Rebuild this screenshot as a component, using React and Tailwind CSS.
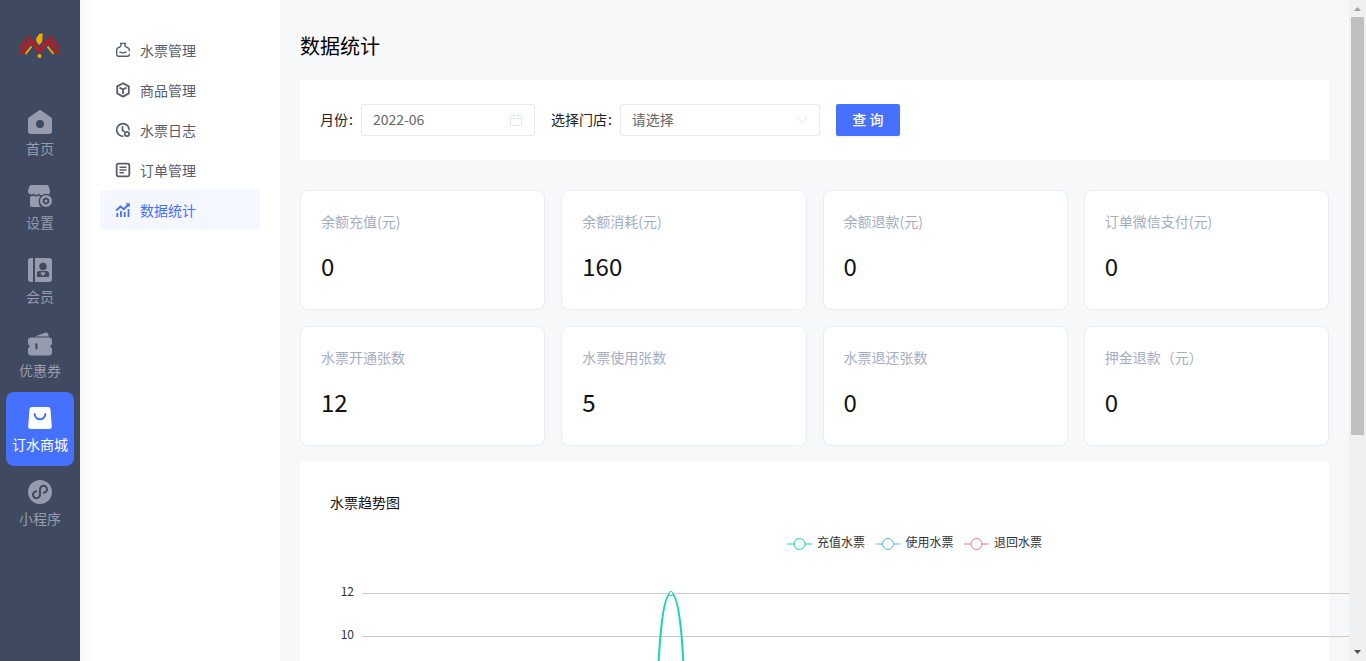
import React, { useState } from 'react';

/* ---------- Sidebar icons (24 x 24) ---------- */

const HomeIcon = () => (
  <svg width="24" height="24" viewBox="0 0 24 24" fill="currentColor" aria-hidden="true">
    <path
      fillRule="evenodd"
      d="M10.9.4a1.8 1.8 0 0 1 2.2 0l10 7.2c.6.4.9 1 .9 1.700V21a3 3 0 0 1-3 3H3a3 3 0 0 1-3-3V9.300c0-.7.3-1.300.9-1.700L10.900.4ZM12 10a4 4 0 1 0 0 8 4 4 0 0 0 0-8Z"
    />
  </svg>
);

const ShopIcon = () => (
  <svg width="24" height="24" viewBox="0 0 24 24" fill="currentColor" aria-hidden="true">
    <path d="M3.200 1h15.600c.8 0 1.400.4 1.700 1.100L22 6.500V8a3 3 0 0 1-1.200 2.300A7 7 0 0 0 14.300 11a3 3 0 0 1-3.300-1.500 3.300 3.300 0 0 1-5.500 0A3.300 3.300 0 0 1 0 8V6.500l1.500-4.400C1.800 1.400 2.400 1 3.200 1Z" />
    <path d="M2 12.500c1.400.1 2.600-.2 3.600-1 1.600 1.300 3.700 1.300 5.300 0 .4.400.9.700 1.400.9A7.500 7.500 0 0 0 13 23H4a2 2 0 0 1-2-2v-8.500Z" />
    <path fillRule="evenodd" d="M18 11a6 6 0 1 1 0 12 6 6 0 0 1 0-12Zm0 2.300-3.200 1.900v3.600l3.200 1.900 3.200-1.900v-3.600L18 13.300Zm0 2.200a1.500 1.500 0 1 1 0 3 1.500 1.500 0 0 1 0-3Z" />
  </svg>
);

const MemberIcon = () => (
  <svg width="24" height="24" viewBox="0 0 24 24" fill="currentColor" aria-hidden="true">
    <path d="M3 0h2v24H3a3 3 0 0 1-3-3V3a3 3 0 0 1 3-3Z" />
    <path
      fillRule="evenodd"
      d="M7 0h14a3 3 0 0 1 3 3v18a3 3 0 0 1-3 3H7V0Zm8 4.800a3.700 3.700 0 1 0 0 7.400 3.700 3.700 0 0 0 0-7.400ZM11.500 13A2.500 2.500 0 0 0 9 15.500V18c0 .6.4 1 1 1h10c.6 0 1-.4 1-1v-2.500a2.500 2.500 0 0 0-2.500-2.500h-7Zm3.500 5-2-2c-.5-.6-.4-1.500.3-1.800.6-.3 1.300-.1 1.700.5.400-.6 1.100-.8 1.700-.5.700.3.8 1.200.3 1.800l-2 2Z"
    />
  </svg>
);

const CouponIcon = () => (
  <svg width="24" height="24" viewBox="0 0 24 24" fill="currentColor" aria-hidden="true">
    <path d="M7 4.500 17.500.6c.9-.3 1.800.1 2.200.9L21 4.500H7Z" />
    <path
      fillRule="evenodd"
      d="M3 5.500h18a3 3 0 0 1 3 3v4a1.700 1.700 0 0 0 0 3.400v4.600a3 3 0 0 1-3 3H3a3 3 0 0 1-3-3v-4.600a1.700 1.700 0 0 0 0-3.400v-4a3 3 0 0 1 3-3Zm5.400 5.700c-.7 0-1.100.4-1.100 1.100v4c0 .7.4 1.100 1.100 1.100s1.100-.4 1.100-1.100v-4c0-.7-.4-1.100-1.100-1.100Z"
    />
  </svg>
);

const MallIcon = () => (
  <svg width="24" height="24" viewBox="0 0 24 24" aria-hidden="true">
    <path fill="currentColor" d="M4 1h16a2.500 2.500 0 0 1 2.500 2.300l1.300 17A2.500 2.500 0 0 1 21.300 23H2.700a2.500 2.500 0 0 1-2.500-2.700l1.300-17A2.500 2.500 0 0 1 4 1Z" />
    <path d="M6.700 8a5.300 5.300 0 0 0 10.600 0" fill="none" stroke="#4670ff" strokeWidth="2" strokeLinecap="round" />
  </svg>
);

const MiniProgramIcon = () => (
  <svg width="24" height="24" viewBox="0 0 24 24" aria-hidden="true">
    <circle cx="12" cy="12" r="12" fill="currentColor" />
    <path
      d="M8.300 11.200a3.500 3.500 0 1 0 3.700 3.500V9.300a3.500 3.500 0 1 1 3.700 3.500"
      fill="none"
      stroke="#3f495f"
      strokeWidth="2"
      strokeLinecap="round"
    />
  </svg>
);

/* ---------- Submenu icons (16 x 16) ---------- */

const TicketIcon = () => (
  <svg width="16" height="16" viewBox="0 0 16 16" fill="none" stroke="currentColor" strokeWidth="1.400" aria-hidden="true">
    <path d="M5 1.400h6M6 1.400v1.800c0 .8-.4 1.200-1.100 1.600L3 5.900c-.8.5-1.300 1.100-1.300 2v4.900c0 .9.500 1.400 1.400 1.400h9.800c.9 0 1.400-.5 1.400-1.400v-1M10 1.400v1.800c0 .8.4 1.200 1.100 1.600L13 5.900c.8.5 1.300 1.100 1.300 2v1.400" />
    <path d="M4.500 9.800c2 1.200 5 1.200 7 0" />
  </svg>
);

const BoxIcon = () => (
  <svg width="16" height="16" viewBox="0 0 16 16" fill="none" stroke="currentColor" strokeWidth="1.800" strokeLinejoin="round" aria-hidden="true">
    <path d="m8 1.200 5.800 3.200v7L8 14.600l-5.800-3.200v-7L8 1.200Z" />
    <path d="M4.500 5.600 8 7.500l3.500-1.900M8 7.500v4.500" />
  </svg>
);

const LogIcon = () => (
  <svg width="16" height="16" viewBox="0 0 16 16" fill="none" stroke="currentColor" strokeWidth="1.700" aria-hidden="true">
    <path d="M8.500 14.200A6.300 6.300 0 1 1 14.200 8.300" />
    <path d="M7.500 4.300V8.300l2 1.500" />
    <circle cx="12" cy="12" r="2.200" />
  </svg>
);

const OrderIcon = () => (
  <svg width="16" height="16" viewBox="0 0 16 16" fill="none" stroke="currentColor" strokeWidth="1.800" aria-hidden="true">
    <rect x="1.700" y="1.700" width="12.600" height="12.600" rx="1.500" />
    <path d="M4.500 5.200h7M4.500 8h7M4.500 10.700h4.500" strokeWidth="1.500" />
  </svg>
);

const StatsIcon = () => (
  <svg width="16" height="16" viewBox="0 0 16 16" fill="none" stroke="currentColor" strokeWidth="1.800" aria-hidden="true">
    <path d="M2.300 15v-4M6 15V9M9.700 15v-5M13.500 15V7" />
    <path d="M1.200 8.500 5.500 4.500l3.300 2.700 4.700-4.700" />
    <path d="M10.500 1.200h4.300v4.300Z" fill="currentColor" stroke="none" />
  </svg>
);

const Logo = () => (
  <svg width="42" height="26" viewBox="0 0 42 26" fill="none" aria-label="logo">
    <g stroke="#c8161d">
      <path d="M.5 14.500 10.500 2.500M40.500 14.500 30.500 2.500" strokeWidth="1.900" />
      <path d="M1.500 20.500 12 7.500 20.500 18 29 7.500 39.500 20.500" strokeWidth="2.800" />
    </g>
    <path d="M6.500 21 12.500 13.500M34.500 21 28.500 13.500" stroke="#f5a800" strokeWidth="2" />
    <path d="M19.500 1.600c1.300-1.400 3.600-1.400 5-.3l-1.400 1.100c.9 2.800 1 6-2.700 9.600-3.600-2.900-4.100-5.900-2.200-8 .6-.8 1-1.500 1.300-2.400Z" fill="#f5a800" />
    <circle cx="20.500" cy="23" r="2" fill="#f5a800" />
  </svg>
);

/* ---------- Data ---------- */

const NAV_ITEMS = [
  { label: '首页', icon: HomeIcon },
  { label: '设置', icon: ShopIcon },
  { label: '会员', icon: MemberIcon },
  { label: '优惠券', icon: CouponIcon },
  { label: '订水商城', icon: MallIcon, active: true },
  { label: '小程序', icon: MiniProgramIcon },
];

const MENU_ITEMS = [
  { label: '水票管理', icon: TicketIcon },
  { label: '商品管理', icon: BoxIcon },
  { label: '水票日志', icon: LogIcon },
  { label: '订单管理', icon: OrderIcon },
  { label: '数据统计', icon: StatsIcon, active: true },
];

const STATS = [
  { label: '余额充值(元)', value: 0 },
  { label: '余额消耗(元)', value: 160 },
  { label: '余额退款(元)', value: 0 },
  { label: '订单微信支付(元)', value: 0 },
  { label: '水票开通张数', value: 12 },
  { label: '水票使用张数', value: 5 },
  { label: '水票退还张数', value: 0 },
  { label: '押金退款（元）', value: 0 },
];

const SERIES = [
  { name: '充值水票', color: '#19d4ae' },
  { name: '使用水票', color: '#5ab1ef' },
  { name: '退回水票', color: '#fa6e86' },
];

const TICKS = [12, 10];

/* ---------- Layout parts ---------- */

const Sidebar = () => (
  <nav className="w-20 shrink-0 bg-[#3f495f] px-1.5">
    <div className="flex h-24 items-center justify-center pb-1">
      <Logo />
    </div>
    {NAV_ITEMS.map(({ label, icon: Icon, active }) => (
      <a
        key={label}
        href="#"
        className={`flex flex-col items-center gap-[3px] rounded-lg pt-3.5 pb-[11px] text-sm leading-[22px] ${
          active ? 'bg-[#4670ff] text-white' : 'text-[#969cae]'
        }`}
      >
        <Icon />
        <span className="whitespace-nowrap">{label}</span>
      </a>
    ))}
  </nav>
);

const SubMenu = () => (
  <nav className="w-[200px] shrink-0 bg-white bg-linear-to-r from-[#f7f7f7] to-white to-[14px] px-5 pt-[30px]">
    {MENU_ITEMS.map(({ label, icon: Icon, active }) => (
      <a
        key={label}
        href="#"
        className={`flex h-10 items-center gap-2 rounded pl-[15px] text-sm ${
          active ? 'bg-[#f4f7ff] text-[#4670ff]' : 'text-[#595d69]'
        }`}
      >
        <Icon />
        <span className="ml-px">{label}</span>
      </a>
    ))}
  </nav>
);

const FilterBar = () => {
  const [month, setMonth] = useState('2022-06');

  return (
    <form className="flex items-center gap-4 bg-white px-5 py-6 text-sm" onSubmit={(e) => e.preventDefault()}>
      <div className="flex items-center">
        <label htmlFor="month" className="pb-0.5 text-[#222]">
          月份<span className="mr-2 ml-px">:</span>
        </label>
        <div className="relative">
          <input
            id="month"
            type="text"
            value={month}
            onChange={(e) => setMonth(e.target.value)}
            className="block h-8 w-[174px] rounded-xs border border-[#e8eaf4] px-[11px] pb-0.5 text-[#666] outline-none"
          />
          <svg className="absolute top-[9px] right-3" width="14" height="14" viewBox="0 0 14 14" fill="none" stroke="#e4e6f0" aria-hidden="true">
            <path d="M1.500 2.500h11v10h-11ZM1.500 5.500h11M4.500.5v3M9.500.5v3" />
          </svg>
        </div>
      </div>
      <div className="flex items-center">
        <label htmlFor="store" className="pb-0.5 text-[#222]">
          选择门店<span className="mr-2 ml-px">:</span>
        </label>
        <div className="relative">
          <select
            id="store"
            className="block h-8 w-[200px] appearance-none rounded-xs border border-[#e8eaf4] bg-white px-[11px] pb-0.5 text-[#666] outline-none"
          >
            <option>请选择</option>
          </select>
          <svg className="absolute top-2.5 right-3" width="12" height="12" viewBox="0 0 12 12" fill="none" stroke="#e4e6f0" aria-hidden="true">
            <path d="m1 2.500 5 6.500 5-6.500" />
          </svg>
        </div>
      </div>
      <button type="submit" className="h-8 w-16 rounded-xs bg-[#4670ff] pb-0.5 font-medium text-white shadow-[0_2px_0_rgba(0,0,0,0.045)]">
        查 询
      </button>
    </form>
  );
};

const StatCard = ({ label, value }) => (
  <div className="h-[120px] rounded-lg border border-[#e9ebf5] bg-white px-5 pt-[19px]">
    <div className="text-sm leading-[22px] text-[#a5adc3]">{label}</div>
    <div className="mt-4 text-2xl leading-9 text-[#111]">{value}</div>
  </div>
);

const TrendChart = () => (
  <svg className="mt-[9px] block w-[1170px]" height="370" viewBox="0 0 1170 370" fontSize="12" fill="#333">
    {SERIES.map(({ name, color }, i) => (
      <g key={name} transform={`translate(${457 + i * 88.5} 22)`}>
        <path d="M0 0h25" stroke={color} />
        <circle cx="12.500" cy="0" r="5.500" fill="#fff" stroke={color} />
        <text x="30" y="3">{name}</text>
      </g>
    ))}
    {TICKS.map((tick, i) => (
      <g key={tick}>
        <path d={`M32 ${71.5 + i * 43}H1160`} stroke="#ccc" />
        <text x="24" y={74 + i * 43} textAnchor="end">{tick}</text>
      </g>
    ))}
    <path
      d="M32 329.500H307C331 329.500 321 71.500 341 71.500S351 329.500 375 329.500H1160"
      fill="none"
      stroke="#19d4ae"
      strokeWidth="2"
    />
    <circle cx="341" cy="71.500" r="2" fill="#fff" stroke="#19d4ae" />
  </svg>
);

// Page scroll indicator on the right edge
const ScrollRail = () => (
  <div className="flex w-[17px] shrink-0 flex-col items-center justify-between bg-[#f0f0f0]">
    <svg className="shrink-0" width="17" height="17" viewBox="0 0 17 17" fill="#a3a3a3" aria-hidden="true">
      <path d="m8.500 7 3.500 4H5Z" />
    </svg>
    <div className="flex w-full flex-1 flex-col items-center">
      <div className="h-2/3 w-[13px] bg-[#c0c0c0]" />
    </div>
    <svg className="shrink-0" width="17" height="17" viewBox="0 0 17 17" fill="#505050" aria-hidden="true">
      <path d="m8.500 10 3.500-4H5Z" />
    </svg>
  </div>
);

const App = () => (
  <div className="flex h-screen overflow-hidden bg-[#f7f8fa] font-['Noto_Sans_CJK_SC',sans-serif]">
    <Sidebar />
    <SubMenu />
    <main className="min-w-0 flex-1 overflow-hidden px-5 pt-[30px]">
      <h1 className="mb-[18px] text-xl leading-8 text-black">数据统计</h1>
      <FilterBar />
      <section className="mt-[30px] grid grid-cols-4 gap-4">
        {STATS.map((stat) => (
          <StatCard key={stat.label} {...stat} />
        ))}
      </section>
      <section className="mt-4 bg-white px-[30px] pt-[29px] pb-[30px]">
        <h2 className="text-sm leading-[22px] text-[#111]">水票趋势图</h2>
        <TrendChart />
      </section>
    </main>
    <ScrollRail />
  </div>
);

export default App;
